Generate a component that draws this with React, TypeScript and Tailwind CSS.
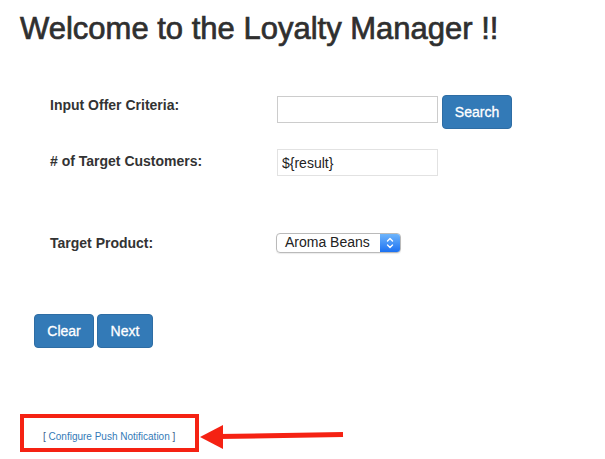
import React from 'react'

function SelectStepper() {
  return (
    <span className="flex w-[20px] items-center justify-center bg-linear-to-b from-[#6db4fb] to-[#1a70f1]">
      <svg width="8" height="14" viewBox="0 0 8 14" fill="none" stroke="#fff" strokeWidth="1.4" strokeLinecap="round" strokeLinejoin="round">
        <path d="M1.5 5 L4 2.5 L6.5 5" />
        <path d="M1.5 9 L4 11.5 L6.5 9" />
      </svg>
    </span>
  )
}

export default function App() {
  return (
    <div className="relative h-[459px] w-[605px] overflow-hidden bg-white font-['Liberation_Sans',Arial,sans-serif] text-[#333]">
      <h1 className="pl-[20px] pt-[12px] text-[31px] font-normal leading-[34px] text-[#2f2f2f] [-webkit-text-stroke:0.7px_#2f2f2f]">
        Welcome to the Loyalty Manager !!
      </h1>

      <div className="mt-[49px] pl-[50px]">
        <div className="flex h-[34px] items-start">
          <label className="w-[227px] text-[14px] font-bold leading-[20px]">Input Offer Criteria:</label>
          <input
            type="text"
            className="mt-[1px] h-[27px] w-[161px] border border-[#cccccc] px-[4px] text-[14px] outline-none"
          />
          <button className="ml-[4px] h-[34px] w-[70px] rounded-[4px] border border-[#2e6da4] bg-[#337ab7] text-[14px] leading-[20px] text-white [-webkit-text-stroke:0.3px_#fff]">
            Search
          </button>
        </div>

        <div className="mt-[20px] flex h-[27px] items-start">
          <label className="w-[227px] pt-[2px] text-[14px] font-bold leading-[20px]">
            # of Target Customers:
          </label>
          <input
            type="text"
            readOnly
            value="${result}"
            className="h-[27px] w-[161px] border border-[#e2e2e2] px-[4px] text-[14px] leading-[20px] text-[#222] outline-none"
          />
        </div>

        <div className="mt-[57px] flex h-[20px] items-start">
          <label className="w-[226px] text-[14px] font-bold leading-[20px]">Target Product:</label>
          <div className="flex h-[20px] w-[125px] overflow-hidden rounded-[4px] border border-[#bababa] shadow-[0_1px_1px_rgba(0,0,0,0.08)]">
            <span className="flex-1 pl-[8px] text-[14px] leading-[17px] text-[#222]">Aroma Beans</span>
            <SelectStepper />
          </div>
        </div>
      </div>

      <div className="mt-[61px] flex gap-[3px] pl-[34px]">
        <button className="h-[34px] w-[60px] rounded-[4px] border border-[#2e6da4] bg-[#337ab7] text-[14px] leading-[20px] text-white [-webkit-text-stroke:0.3px_#fff]">
          Clear
        </button>
        <button className="h-[34px] w-[56px] rounded-[4px] border border-[#2e6da4] bg-[#337ab7] text-[14px] leading-[20px] text-white [-webkit-text-stroke:0.3px_#fff]">
          Next
        </button>
      </div>

      <div className="ml-[20px] mt-[66px] h-[38px] w-[179px] border-[4px] border-[#f52213] pl-[19px] pt-[13px] text-[10px] leading-[12px]">
        <span className="text-[#3b5f8a]">[ </span>
        <a href="#" className="text-[#337ab7]">Configure Push Notification</a>
        <span className="text-[#3b5f8a]"> ]</span>
      </div>

      {/* annotation arrow pointing at the link */}
      <svg className="absolute left-[196px] top-[420px]" width="152" height="34" viewBox="196 420 152 34">
        <line x1="218" y1="436.5" x2="343" y2="434.5" stroke="#f52213" strokeWidth="5" />
        <polygon points="200,437 223,425 223,449" fill="#f52213" />
      </svg>
    </div>
  )
}
